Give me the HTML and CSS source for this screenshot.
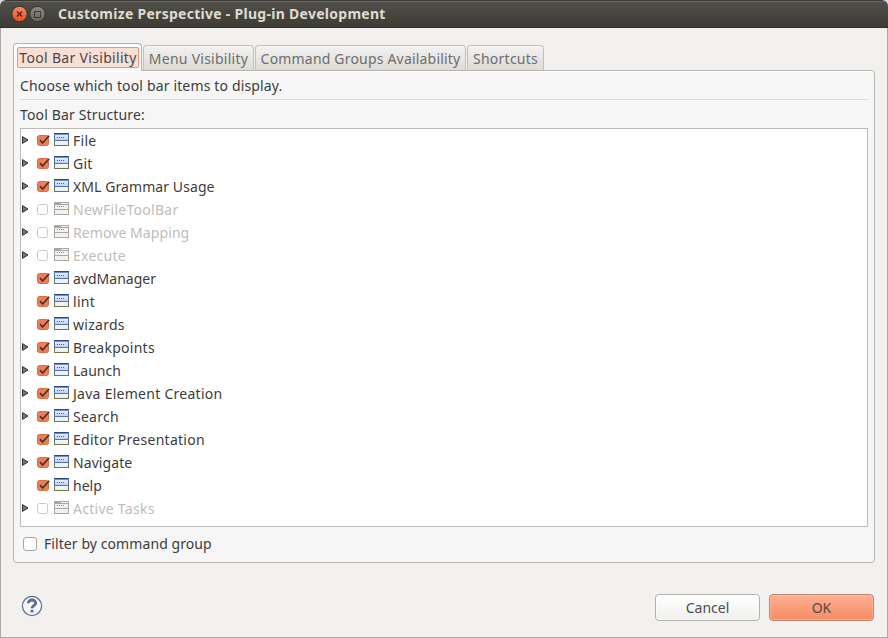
FILE: index.html
```
<!DOCTYPE html>
<html lang="en">
<head>
<meta charset="utf-8">
<title>Customize Perspective - Plug-in Development</title>
<link rel="stylesheet" href="styles.css">
</head>
<body>
<svg class="defs" width="0" height="0">
  <defs>
    <linearGradient id="g-red" x1="0" y1="0" x2="0" y2="1"><stop offset="0" stop-color="#f58a68"/><stop offset="1" stop-color="#e6501f"/></linearGradient>
    <linearGradient id="g-grey" x1="0" y1="0" x2="0" y2="1"><stop offset="0" stop-color="#8d8b84"/><stop offset="1" stop-color="#66645d"/></linearGradient>
    <linearGradient id="g-bar" x1="0" y1="0" x2="0" y2="1"><stop offset="0" stop-color="#f4f7fe"/><stop offset="1" stop-color="#b9c9ec"/></linearGradient>
    <linearGradient id="g-low" x1="0" y1="0" x2="0" y2="1"><stop offset="0" stop-color="#ffffff"/><stop offset="1" stop-color="#e2f1f8"/></linearGradient>
  </defs>
  <symbol id="arrow" viewBox="0 0 7 8"><path d="M.5 .6 6 4 .5 7.4Z" fill="#777" stroke="#333" stroke-width="1"/></symbol>
  <symbol id="checked" viewBox="0 0 14 13"><rect x=".5" y="1.5" width="11" height="10" rx="2" fill="#f27d54" stroke="#dd6c45"/><path d="M3 6.2 5.6 9 12.200 1.800" fill="none" stroke="#3d3632" stroke-width="1.7"/></symbol>
  <symbol id="unchecked" viewBox="0 0 14 13"><rect x=".5" y="1.5" width="10" height="10" rx="2" fill="#fff" stroke="#cbc7c2"/></symbol>
  <symbol id="bar-on" viewBox="0 0 15 13"><rect x=".5" y=".5" width="14" height="12" fill="url(#g-low)" stroke="#77734a"/><path d="M.5 8V.5h14V8" fill="url(#g-bar)" stroke="#4b69ab"/><path d="M0 .5h15" stroke="#274a92"/><path d="M0 1.500h15" stroke="#6f8fcb"/><path d="M0 7.500h15" stroke="#5a72ac"/><path d="M3 4.500h8" stroke="#4a64a6" stroke-dasharray="1 1"/></symbol>
  <symbol id="bar-off" viewBox="0 0 15 13"><rect x=".5" y=".5" width="14" height="12" fill="#f3f1ef" stroke="#aaa7a2"/><path d="M0 1.500h7M0 2.500h15M0 7.500h15" stroke="#aaa7a2"/><path d="M3 4.500h7" stroke="#8f8c88" stroke-dasharray="1 1"/></symbol>
</svg>
<div class="window">
  <header class="titlebar">
    <svg class="controls" width="36" height="18" viewBox="0 0 36 18">
      <circle cx="8.5" cy="9" r="7.7" fill="url(#g-red)" stroke="#34322d"/>
      <path d="m6 6.500 5 5m0-5-5 5" stroke="#4c2416" stroke-width="1.3"/>
      <circle cx="26.500" cy="9" r="7.700" fill="url(#g-grey)" stroke="#34322d"/>
      <rect x="23.500" y="6.500" width="6" height="6" fill="none" stroke="#3b3a35"/>
    </svg>
    <h1>Customize Perspective - Plug-in Development</h1>
  </header>
  <main class="content">
    <nav class="tabs">
      <div class="tab active"><span class="focus">Tool Bar Visibility</span></div>
      <div class="tab menu">Menu Visibility</div>
      <div class="tab groups">Command Groups Availability</div>
      <div class="tab short">Shortcuts</div>
    </nav>
    <section class="panel">
      <p class="intro">Choose which tool bar items to display.</p>
      <p class="label">Tool Bar Structure:</p>
      <ul class="tree">
        <li><svg class="arrow"><use href="#arrow"/></svg><svg class="check"><use href="#checked"/></svg><svg class="icon"><use href="#bar-on"/></svg><span class="wide">File</span></li>
        <li><svg class="arrow"><use href="#arrow"/></svg><svg class="check"><use href="#checked"/></svg><svg class="icon"><use href="#bar-on"/></svg><span class="wide">Git</span></li>
        <li><svg class="arrow"><use href="#arrow"/></svg><svg class="check"><use href="#checked"/></svg><svg class="icon"><use href="#bar-on"/></svg><span class="slight">XML Grammar Usage</span></li>
        <li class="off"><svg class="arrow"><use href="#arrow"/></svg><svg class="check"><use href="#unchecked"/></svg><svg class="icon"><use href="#bar-off"/></svg><span class="wide">NewFileToolBar</span></li>
        <li class="off"><svg class="arrow"><use href="#arrow"/></svg><svg class="check"><use href="#unchecked"/></svg><svg class="icon"><use href="#bar-off"/></svg><span class="slight">Remove Mapping</span></li>
        <li class="off"><svg class="arrow"><use href="#arrow"/></svg><svg class="check"><use href="#unchecked"/></svg><svg class="icon"><use href="#bar-off"/></svg><span class="wide">Execute</span></li>
        <li><svg class="arrow"></svg><svg class="check"><use href="#checked"/></svg><svg class="icon"><use href="#bar-on"/></svg><span>avdManager</span></li>
        <li><svg class="arrow"></svg><svg class="check"><use href="#checked"/></svg><svg class="icon"><use href="#bar-on"/></svg><span class="wide">lint</span></li>
        <li><svg class="arrow"></svg><svg class="check"><use href="#checked"/></svg><svg class="icon"><use href="#bar-on"/></svg><span class="wide">wizards</span></li>
        <li><svg class="arrow"><use href="#arrow"/></svg><svg class="check"><use href="#checked"/></svg><svg class="icon"><use href="#bar-on"/></svg><span class="wide">Breakpoints</span></li>
        <li><svg class="arrow"><use href="#arrow"/></svg><svg class="check"><use href="#checked"/></svg><svg class="icon"><use href="#bar-on"/></svg><span>Launch</span></li>
        <li><svg class="arrow"><use href="#arrow"/></svg><svg class="check"><use href="#checked"/></svg><svg class="icon"><use href="#bar-on"/></svg><span class="wide">Java Element Creation</span></li>
        <li><svg class="arrow"><use href="#arrow"/></svg><svg class="check"><use href="#checked"/></svg><svg class="icon"><use href="#bar-on"/></svg><span class="wide">Search</span></li>
        <li><svg class="arrow"></svg><svg class="check"><use href="#checked"/></svg><svg class="icon"><use href="#bar-on"/></svg><span class="wide">Editor Presentation</span></li>
        <li><svg class="arrow"><use href="#arrow"/></svg><svg class="check"><use href="#checked"/></svg><svg class="icon"><use href="#bar-on"/></svg><span class="slight">Navigate</span></li>
        <li><svg class="arrow"></svg><svg class="check"><use href="#checked"/></svg><svg class="icon"><use href="#bar-on"/></svg><span>help</span></li>
        <li class="off"><svg class="arrow"><use href="#arrow"/></svg><svg class="check"><use href="#unchecked"/></svg><svg class="icon"><use href="#bar-off"/></svg><span class="wide">Active Tasks</span></li>
      </ul>
      <label class="filter"><span class="box"></span><span class="slight">Filter by command group</span></label>
    </section>
    <footer class="actions">
      <svg class="help" width="22" height="22" viewBox="0 0 22 22"><circle cx="11" cy="11" r="9.600" fill="#f8f8fb" stroke="#5d6c8f" stroke-width="1.200"/><path d="M7.300 8.200C7.300 3.900 14.700 3.900 14.700 8.200 14.700 10.700 11 10.500 11 13.300M11 14.800v2.600" fill="none" stroke="#5b6b90" stroke-width="2.800"/></svg>
      <button class="btn">Cancel</button>
      <button class="btn ok">OK</button>
    </footer>
  </main>
</div>
</body>
</html>
```
FILE: styles.css
```
* { box-sizing: border-box; }
body { margin: 0; background: #d9dde0; font: 14px/23px "Noto Sans", "Open Sans", sans-serif; color: #3c3c3c; }
.defs { position: absolute; }
.window { width: 888px; height: 638px; display: flex; flex-direction: column; background: #f2f1f0; border-radius: 6px 6px 0 0; overflow: hidden; }
.titlebar { height: 28px; flex: none; display: flex; align-items: center; padding-left: 11px; background: linear-gradient(#504f48, #3d3c37); border-top: 1px solid #3a3935; border-bottom: 1px solid #31302c; box-shadow: inset 0 1px #69675f; }
.titlebar h1 { margin: 0 0 0 11px; font-size: 14px; line-height: 26px; font-weight: 700; letter-spacing: .28px; color: #dfdbd2; white-space: nowrap; }
.content { flex: 1; display: flex; flex-direction: column; padding: 15px 12px 0; border: 1px solid #aaa8a4; border-top: 0; }
.tabs { display: flex; align-items: flex-end; gap: 1px; height: 28px; position: relative; z-index: 1; margin-bottom: -1px; }
.tab { height: 26px; line-height: 26px; text-align: center; white-space: nowrap; letter-spacing: .25px; color: #6e6c6a; border: 1px solid #c2beb9; border-bottom-color: #b6b2ad; border-radius: 4px 4px 0 0; background: linear-gradient(#f3f2f1, #dedbd8); box-shadow: inset 0 1px #fafafa; }
.tab.active { width: 129px; height: 28px; padding: 3px 2px 0 3px; background: linear-gradient(#fff, #f6f6f6); border-color: #b6b2ad; border-bottom: 0; color: #4a4745; line-height: 19px; letter-spacing: .32px; }
.focus { display: block; height: 21px; border: 1px solid #ee9270; border-radius: 2px; background: #f8dfd6; }
.tab.menu { width: 111px; }
.tab.groups { width: 211px; letter-spacing: .19px; }
.tab.short { width: 77px; }
.panel { height: 493px; width: 862px; padding: 0 6px; border: 1px solid #b9b6b1; border-radius: 0 4px 4px 4px; background: #f6f6f6; box-shadow: inset 0 1px #fff; }
.panel p { margin: 0; letter-spacing: .15px; }
.intro { height: 29px; line-height: 29px; border-bottom: 1px solid #dcdcdc; }
.label { height: 28px; line-height: 29px; }
.tree { margin: 0; padding: 0; list-style: none; height: 399px; width: 848px; background: #fff; border: 1px solid #bdbab5; }
.tree li { display: flex; height: 23px; white-space: nowrap; }
.tree span { margin-left: 4px; }
.wide { letter-spacing: .27px; }
.slight { letter-spacing: .08px; }
.off { color: #bfbcba; }
.arrow { width: 7px; height: 8px; margin: 7px 8px 0 1px; }
.check { width: 14px; height: 13px; margin: 5px 3px 0 0; }
.icon { width: 15px; height: 13px; margin-top: 4px; }
.filter { display: flex; align-items: center; gap: 7px; height: 33px; padding-left: 3px; }
.box { width: 14px; height: 14px; border: 1px solid #aaa7a3; border-radius: 3px; background: #fff; }
.actions { display: flex; margin-top: 31px; padding: 0 1px 0 8px; }
.help { margin: 1px auto 0 0; }
.btn { width: 105px; height: 27px; padding: 0; margin-left: 9px; font: inherit; line-height: 25px; color: #4c4c4c; border: 1px solid #b3b0ac; border-radius: 4px; background: linear-gradient(#fff, #f0efee); box-shadow: inset 0 0 0 1px #fff8; }
.ok { background: linear-gradient(#ffb096, #f58b63); border-color: #bd8570; box-shadow: inset 0 0 0 1px #ffc5b080; }
```
